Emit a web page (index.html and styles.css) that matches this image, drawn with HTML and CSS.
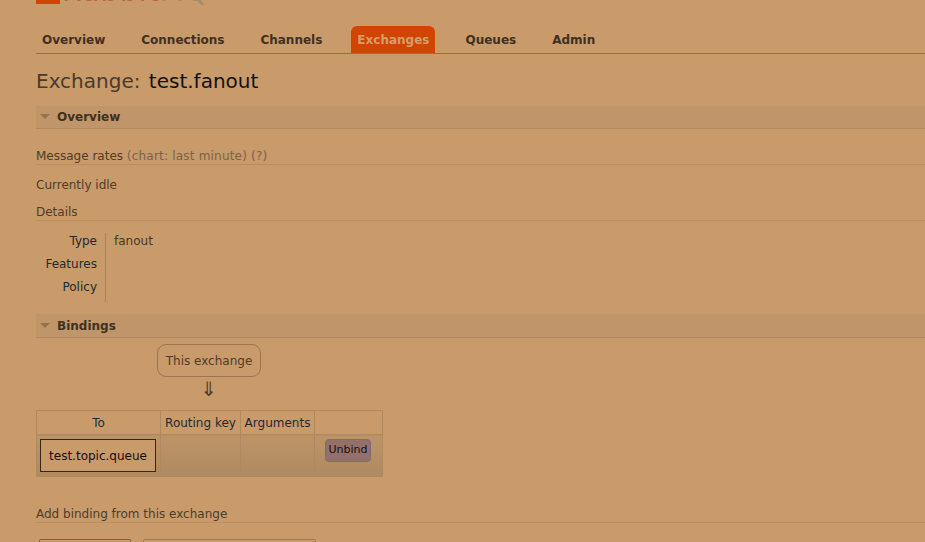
FILE: index.html
```html
<!DOCTYPE html>
<html lang="en">
<head>
<meta charset="utf-8">
<title>Exchange: test.fanout</title>
<link rel="stylesheet" href="styles.css">
</head>
<body>
<div class="page">
  <header class="logo">
    <svg class="logo-mark" width="24" height="4" viewBox="0 0 24 4"><rect width="24" height="4" fill="#d04500"/></svg>
    <span class="logo-text">Rabbit<span class="logo-mq">MQ</span></span>
  </header>
  <nav class="tabs">
    <a class="tab">Overview</a>
    <a class="tab">Connections</a>
    <a class="tab">Channels</a>
    <a class="tab active">Exchanges</a>
    <a class="tab">Queues</a>
    <a class="tab">Admin</a>
  </nav>
  <h1 class="title">Exchange: <b>test.fanout</b></h1>

  <section class="section">
    <h2 class="bar"><i class="tri"></i>Overview</h2>
    <h3 class="sub first">Message rates <span class="muted">(chart: last minute) (?)</span></h3>
    <p class="idle">Currently idle</p>
    <h3 class="sub">Details</h3>
    <div class="facts">
      <div class="keys"><div>Type</div><div>Features</div><div>Policy</div></div>
      <div class="vals"><div>fanout</div></div>
    </div>
  </section>

  <section class="section">
    <h2 class="bar"><i class="tri"></i>Bindings</h2>
    <div class="flow">
      <div class="this">This exchange</div>
      <div class="arrow">⇓</div>
    </div>
    <table class="list">
      <thead>
        <tr><th class="c1">To</th><th class="c2">Routing key</th><th class="c3">Arguments</th><th class="c4"></th></tr>
      </thead>
      <tbody>
        <tr>
          <td><span class="queue">test.topic.queue</span></td>
          <td></td>
          <td></td>
          <td class="act"><button class="unbind" type="button">Unbind</button></td>
        </tr>
      </tbody>
    </table>
    <h3 class="sub add">Add binding from this exchange</h3>
    <div class="form-row">
      <div class="field f1"></div>
      <div class="field f2"></div>
    </div>
  </section>
</div>
</body>
</html>
```
FILE: styles.css
```css
* { box-sizing: border-box; }
html, body { height: 100%; }
body {
  margin: 0;
  height: 542px;
  overflow: hidden;
  background: #c99a6a;
  color: #3f2f1f;
  font-family: "DejaVu Sans", Verdana, sans-serif;
  font-size: 12px;
}
.page { padding-left: 36px; }
.logo { height: 26px; display: flex; align-items: flex-start; gap: 2px; overflow: hidden; }
.logo-mark { flex: none; }
.logo-text { font-size: 28px; line-height: 28px; margin-top: -22px; color: #b8673c; letter-spacing: 1.3px; }
.logo-mq { color: #a58a68; }
.tabs { display: flex; height: 28px; border-bottom: 1px solid #b5652c; }
.tab { padding: 7px 6px 0; margin-right: 24px; font-weight: bold; font-size: 12px; line-height: 15px; color: #3f3020; height: 27px; }
.tab.active { background: #d04500; color: #d99c6c; border-radius: 6px 6px 0 0; padding: 7px 6px 0; margin-left: -1px; margin-right: 24px; }
.title { margin: 15px 0 0; font-size: 20px; line-height: 24px; font-weight: normal; color: #4a3a2a; }
.title b { font-weight: normal; color: #111; margin-left: 2px; }
.section { margin-top: 13px; }
.bar {
  margin: 0;
  height: 23px;
  background: #bf9569;
  border-bottom: 1px solid #b08a62;
  font-size: 12px;
  line-height: 22px;
  font-weight: bold;
  color: #3f3020;
  display: flex;
  align-items: center;
}
.tri { width: 0; height: 0; margin: 0 7px 2px 4px; border-left: 5px solid transparent; border-right: 5px solid transparent; border-top: 5px solid #917350; }
.sub { margin: 0; font-weight: normal; font-size: 12px; line-height: 19px; border-bottom: 1px solid #b98e62; color: #4d3d2b; height: 18px; }
.first { margin-top: 18px; }
.muted { color: #78644a; letter-spacing: 0.2px; }
.idle { margin: 13px 0 10px; line-height: 15px; color: #4d3d2b; }
.facts { display: flex; margin-top: 12px; }
.keys { width: 70px; border-right: 1px solid #a8825a; padding-right: 8px; padding-top: 1px; text-align: right; color: #1e2a30; height: 69px; }
.keys div, .vals div { height: 23px; line-height: 15px; }
.vals { padding-left: 8px; padding-top: 1px; color: #3f3a2a; }
.section + .section { margin-top: 12px; }
.section + .section .bar { line-height: 24px; padding-top: 1px; height: 24px; }
.flow { margin-top: 6px; width: 346px; display: flex; flex-direction: column; align-items: center; }
.this { width: 104px; height: 33px; border: 1px solid #9b7650; border-radius: 9px; padding-left: 1px; line-height: 33px; text-align: center; color: #4d3d2b; margin-right: 1px; }
.arrow { font-family: "Liberation Sans", "DejaVu Sans", sans-serif; font-size: 20px; line-height: 24px; height: 24px; color: #4d3d2b; }
.list { margin-top: 9px; border-collapse: collapse; table-layout: fixed; width: 346px; }
.list th, .list td { border: 1px solid #ae8a62; padding: 0; }
.list th { height: 24px; font-weight: normal; text-align: center; color: #1e2a30; font-size: 12px; }
.c1 { width: 124px; }
.c2 { width: 80px; }
.c3 { width: 74px; }
.c4 { width: 68px; }
.list td { height: 42px; background: linear-gradient(#bc9468, #af8a60); }
.queue { display: block; margin: 0 3px; width: 116px; height: 33px; border: 1px solid #33261a; background: #c99a6a; color: #111; line-height: 32px; text-align: center; }
.act { vertical-align: top; padding-top: 4px !important; }
.unbind {
  display: block;
  margin: 0 0 0 10px;
  width: 46px;
  height: 23px;
  padding: 0 0 2px;
  border: 1px solid #7f6a80;
  border-radius: 4px;
  background: #93716a;
  color: #111;
  font: 11px "DejaVu Sans", Verdana, sans-serif;
}
.add { margin-top: 28px; }
.form-row { display: flex; margin-top: 16px; padding-left: 3px; gap: 12px; }
.field { height: 24px; border: 1px solid #7a6246; border-bottom: 0; border-radius: 2px 2px 0 0; }
.f1 { width: 92px; }
.f2 { width: 173px; border-color: #a07d55; }
```
